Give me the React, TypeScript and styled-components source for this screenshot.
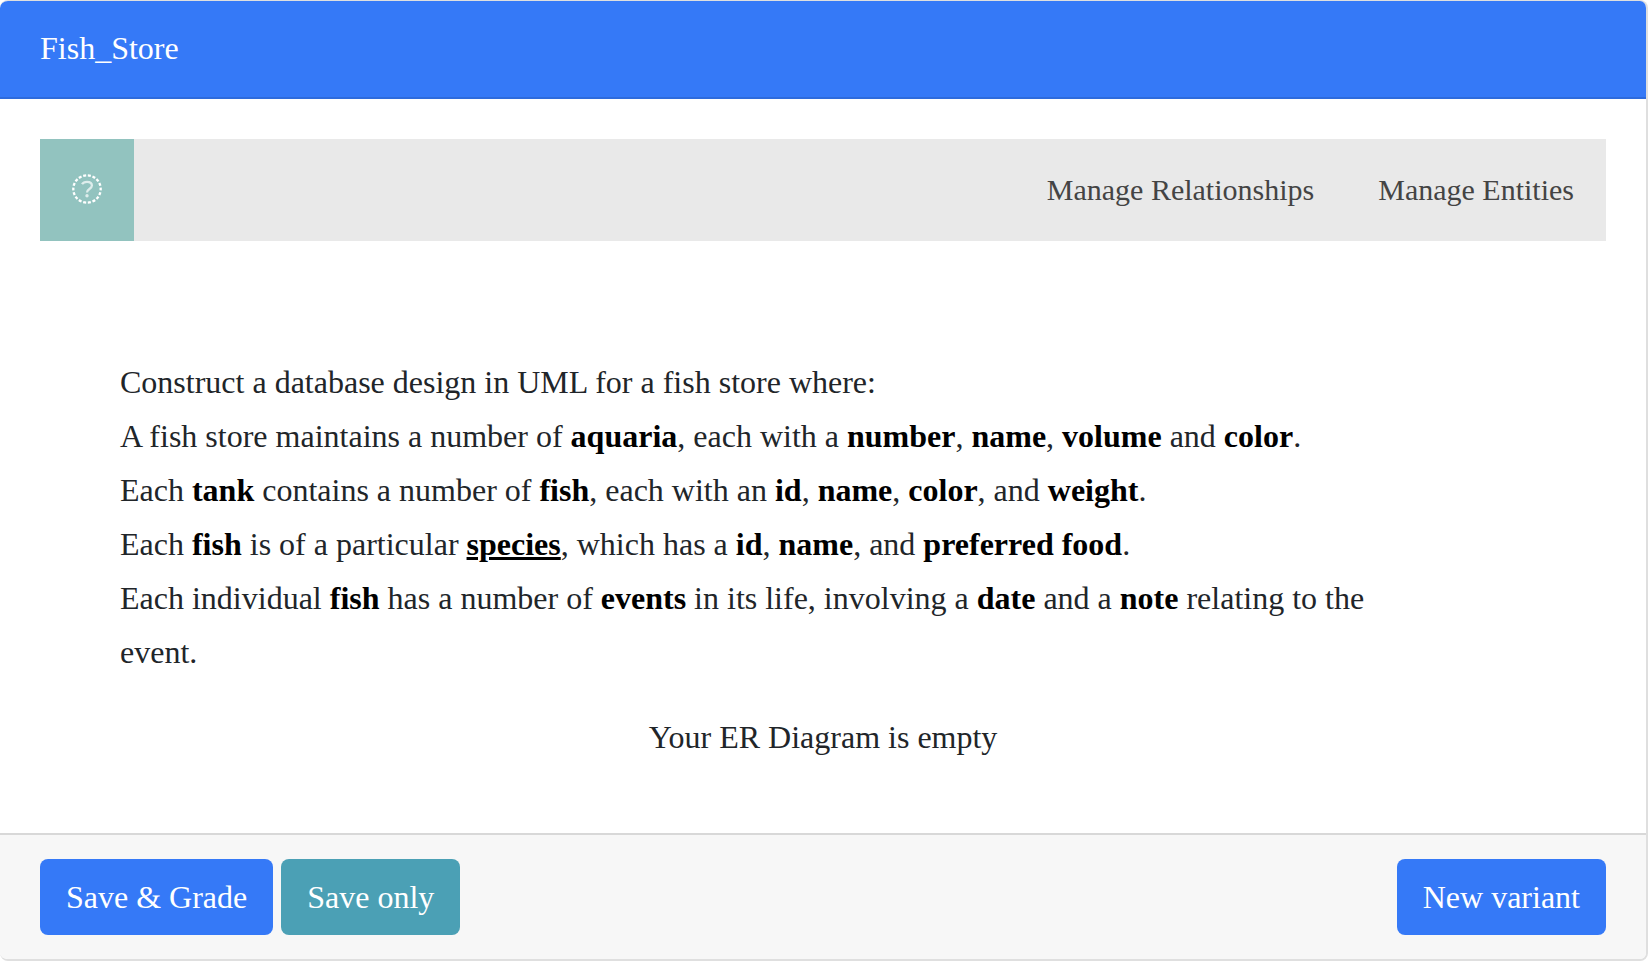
import React from "react";
import styled, { createGlobalStyle } from "styled-components";

const Global = createGlobalStyle`
  * { box-sizing: border-box; }
  body {
    margin: 0;
    background: #fff;
    color: #212529;
    font-family: "Liberation Serif", "Times New Roman", serif;
    font-size: 32px;
    line-height: 48px;
  }
`;

const Card = styled.main`
  display: flex;
  flex-direction: column;
  margin-right: 2px;
  border: solid #dfdfdf;
  border-width: 1px 2px 2px 0;
  border-radius: 8px;
  overflow: hidden;
`;

const Header = styled.header`
  padding: 23px 40px 25px;
  background: #3579f7;
  border-bottom: 2px solid #2e6bdc;
  color: #fff;
`;

const Title = styled.h1`
  margin: 0;
  font-size: 32px;
  font-weight: 400;
`;

const Body = styled.section`
  padding: 40px 40px 72px;
`;

const Toolbar = styled.nav`
  display: flex;
  min-height: 102px;
  background: #e9e9e9;
`;

const Help = styled.button`
  display: flex;
  align-items: center;
  justify-content: center;
  width: 94px;
  margin-right: auto;
  padding: 0 0 2px;
  border: 0;
  background: #92c3bf;
  color: #fff;
`;

const NavButton = styled.button`
  padding: 0 32px;
  border: 0;
  background: none;
  color: #444;
  font: inherit;
  font-size: 30px;
`;

const Prompt = styled.div`
  padding: 114px 160px 0 80px;
  line-height: 54px;
`;

const Line = styled.p`
  margin: 0;
`;

const Term = styled.b<{ $underlined?: boolean }>`
  color: #000;
  text-decoration: ${(p) => (p.$underlined ? "underline" : "none")};
`;

const Empty = styled.p`
  margin: 34px 0 0;
  text-align: center;
`;

const Footer = styled.footer`
  display: flex;
  gap: 8px;
  padding: 24px 40px;
  background: #f7f7f7;
  border-top: 2px solid #d8d8d8;
`;

const Action = styled.button<{ $tone?: string; $end?: boolean }>`
  margin-left: ${(p) => (p.$end ? "auto" : "0")};
  padding: 14px 26px;
  border: 0;
  border-radius: 8px;
  background: ${(p) => p.$tone ?? "#3579f7"};
  color: #fff;
  font: inherit;
`;

export default function App() {
  return (
    <>
      <Global />
      <Card>
        <Header>
          <Title>Fish_Store</Title>
        </Header>
        <Body>
          <Toolbar>
            <Help aria-label="Help">
              <svg width="32" height="32" viewBox="0 0 32 32" fill="none" stroke="currentColor" strokeWidth="2.3">
                <circle cx="16" cy="16" r="13.7" pathLength="180" strokeDasharray="6.4 3.6" strokeDashoffset="-1.8" transform="rotate(-90 16 16)" />
                <g opacity="0.7">
                  <path d="M11 11.2C12 9.5 13.8 8.8 16 8.8c3.2 0 4.9 1.4 4.9 3.7 0 3.6-4.9 3.4-4.9 7" />
                  <circle cx="16" cy="22.7" r="1.7" fill="currentColor" stroke="none" />
                </g>
              </svg>
            </Help>
            <NavButton>Manage Relationships</NavButton>
            <NavButton>Manage Entities</NavButton>
          </Toolbar>
          <Prompt>
            <Line>Construct a database design in UML for a fish store where:</Line>
            <Line>
              A fish store maintains a number of <Term>aquaria</Term>, each with a <Term>number</Term>,{" "}
              <Term>name</Term>, <Term>volume</Term> and <Term>color</Term>.
            </Line>
            <Line>
              Each <Term>tank</Term> contains a number of <Term>fish</Term>, each with an <Term>id</Term>,{" "}
              <Term>name</Term>, <Term>color</Term>, and <Term>weight</Term>.
            </Line>
            <Line>
              Each <Term>fish</Term> is of a particular <Term $underlined>species</Term>, which has a{" "}
              <Term>id</Term>, <Term>name</Term>, and <Term>preferred food</Term>.
            </Line>
            <Line>
              Each individual <Term>fish</Term> has a number of <Term>events</Term> in its life, involving a{" "}
              <Term>date</Term> and a <Term>note</Term> relating to the event.
            </Line>
          </Prompt>
          <Empty>Your ER Diagram is empty</Empty>
        </Body>
        <Footer>
          <Action>Save &amp; Grade</Action>
          <Action $tone="#4ba0b5">Save only</Action>
          <Action $end>New variant</Action>
        </Footer>
      </Card>
    </>
  );
}
